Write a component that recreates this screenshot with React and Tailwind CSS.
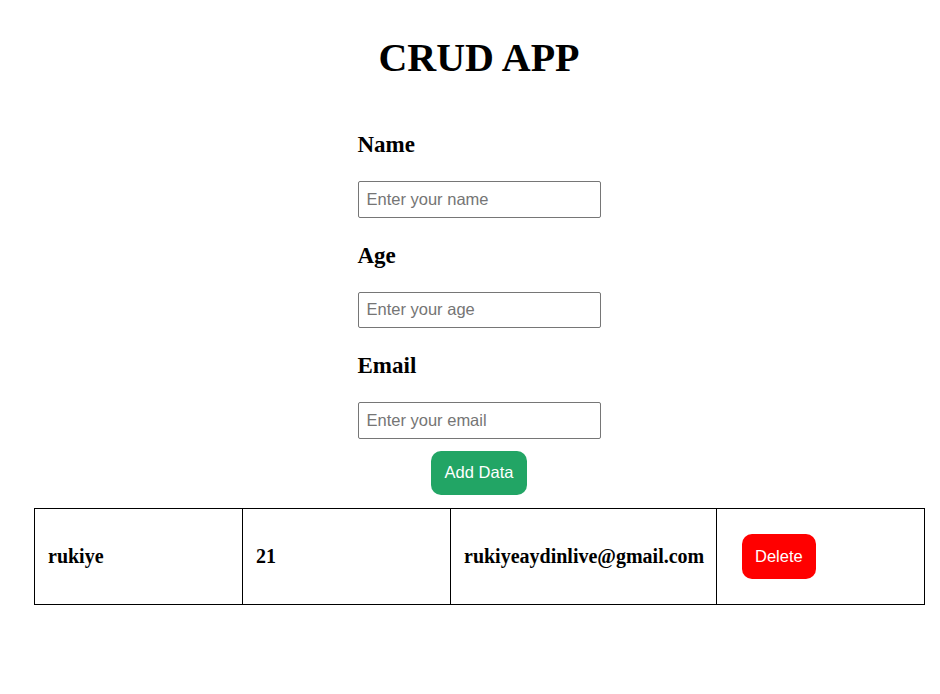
import React, { useState } from "react";

const serif = { fontFamily: '"Liberation Serif", "Times New Roman", serif' };

const App = () => {
  const [formData, setFormData] = useState({ name: "", age: "", email: "" });
  const [rows, setRows] = useState([
    { id: 1, name: "rukiye", age: "21", email: "rukiyeaydinlive@gmail.com" },
  ]);

  const handleChange = (e) => {
    setFormData((prev) => ({ ...prev, [e.target.name]: e.target.value }));
  };

  const addData = () => {
    if (!formData.name) return;
    setRows((prev) => [...prev, { id: Date.now(), ...formData }]);
    setFormData({ name: "", age: "", email: "" });
  };

  const inputClass =
    "w-full h-[36.5px] px-[8px] border border-[#767676] rounded-[2px] text-[16.5px] text-black placeholder:text-[#757575] outline-none font-['Liberation_Sans',Arial,sans-serif]";

  return (
    <div className="min-h-screen bg-white pl-[34px] pr-[16px] pt-[35px] pb-[40px]">
      <h1 style={serif} className="text-center text-[40px] leading-[46px] font-bold text-black">
        CRUD APP
      </h1>

      <div className="w-[243px] mx-auto flex flex-col">
        <label style={serif} className="mt-[51px] mb-[23px] text-[23px] leading-[26px] font-bold text-black">
          Name
        </label>
        <input
          name="name"
          value={formData.name}
          onChange={handleChange}
          placeholder="Enter your name"
          className={inputClass}
        />
        <label style={serif} className="mt-[25px] mb-[23px] text-[23px] leading-[26px] font-bold text-black">
          Age
        </label>
        <input
          name="age"
          value={formData.age}
          onChange={handleChange}
          placeholder="Enter your age"
          className={inputClass}
        />
        <label style={serif} className="mt-[25px] mb-[23px] text-[23px] leading-[26px] font-bold text-black">
          Email
        </label>
        <input
          name="email"
          value={formData.email}
          onChange={handleChange}
          placeholder="Enter your email"
          className={inputClass}
        />
        <button
          onClick={addData}
          className="self-center mt-[12px] h-[44px] px-[14px] rounded-[10px] bg-[#22a565] text-white text-[16.5px] font-['Liberation_Sans',Arial,sans-serif]"
        >
          Add Data
        </button>
      </div>

      <table style={serif} className="mt-[13px] w-[890px] border-collapse table-fixed">
        <colgroup>
          <col className="w-[208px]" />
          <col className="w-[208px]" />
          <col className="w-[266px]" />
          <col className="w-[208px]" />
        </colgroup>
        <tbody>
          {rows.map((row) => (
            <tr key={row.id}>
              <td className="border border-black p-[13px] text-[20px] font-bold text-black whitespace-nowrap">
                {row.name}
              </td>
              <td className="border border-black p-[13px] text-[20px] font-bold text-black whitespace-nowrap">
                {row.age}
              </td>
              <td className="border border-black p-[13px] text-[20px] font-bold text-black whitespace-nowrap">
                {row.email}
              </td>
              <td className="border border-black p-[13px]">
                <button
                  onClick={() => setRows((prev) => prev.filter((r) => r.id !== row.id))}
                  className="m-[12px] h-[45px] px-[13px] rounded-[10px] bg-[#ff0000] text-white text-[16.5px] font-['Liberation_Sans',Arial,sans-serif]"
                >
                  Delete
                </button>
              </td>
            </tr>
          ))}
        </tbody>
      </table>
    </div>
  );
};

export default App;
